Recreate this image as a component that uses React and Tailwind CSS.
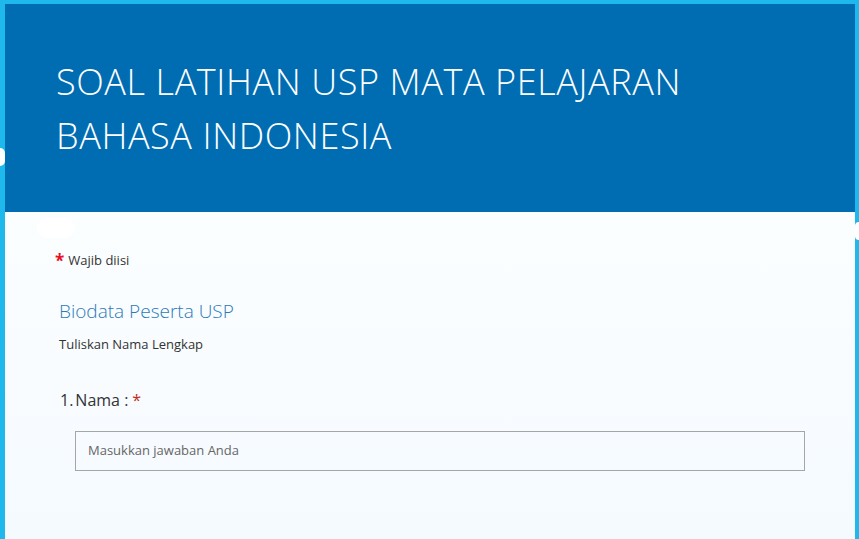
import React from 'react';

// Form header + first question, MS Forms style
const font = { fontFamily: '"Segoe UI", "Open Sans", "Noto Sans", sans-serif' };

export default function App() {
  return (
    <div className="relative h-[539px] w-[859px] overflow-hidden bg-[#1fb8ec] pt-[4px] pl-[5px] pr-[4px]" style={font}>
      {/* background clouds peeking out */}
      <div className="absolute left-0 top-[148px] h-[18px] w-[5px] rounded-r-full bg-white" />
      <div className="absolute right-0 top-[222px] h-[18px] w-[4px] rounded-l-full bg-white" />

      <div className="flex h-full flex-col bg-[#f6fbfe]">
        <div className="h-[208px] bg-[#006db2] pl-[51px] pt-[51px]">
          <h1 className="text-[36px] font-light leading-[54px] tracking-[0.6px] text-white">
            SOAL LATIHAN USP MATA PELAJARAN
            <br />
            BAHASA INDONESIA
          </h1>
        </div>

        <div className="relative flex-1 bg-gradient-to-b from-[#fbfeff] to-[#f5faff] pl-[50px] pr-[50px]">
          <div className="absolute left-[32px] top-[6px] h-[20px] w-[38px] rounded-full bg-white" />

          <div className="flex items-start gap-[4px] pt-[40px] text-[13px] text-[#333]">
            <span className="text-[17px] font-bold leading-[17px] text-[#e81123]">*</span>
            <span className="leading-[17px]">Wajib diisi</span>
          </div>

          <div className="mt-[28px] pl-[4px] text-[19px] font-light leading-[28px] text-[#2b7ab7]">
            Biodata Peserta USP
          </div>
          <div className="mt-[10px] pl-[4px] text-[13px] leading-[18px] text-[#333]">
            Tuliskan Nama Lengkap
          </div>

          <div className="mt-[36px] flex items-baseline pl-[5px] text-[16px] leading-[22px] text-[#333]">
            <span className="mr-[2px]">1.</span>
            <span>Nama :</span>
            <span className="ml-[4px] text-[#c42b1c]">*</span>
          </div>

          <div className="mt-[20px] ml-[20px] mr-0 flex h-[40px] w-[730px] items-center border border-[#a6a6a6] px-[12px] text-[13px] text-[#666]">
            Masukkan jawaban Anda
          </div>
        </div>
      </div>
    </div>
  );
}
